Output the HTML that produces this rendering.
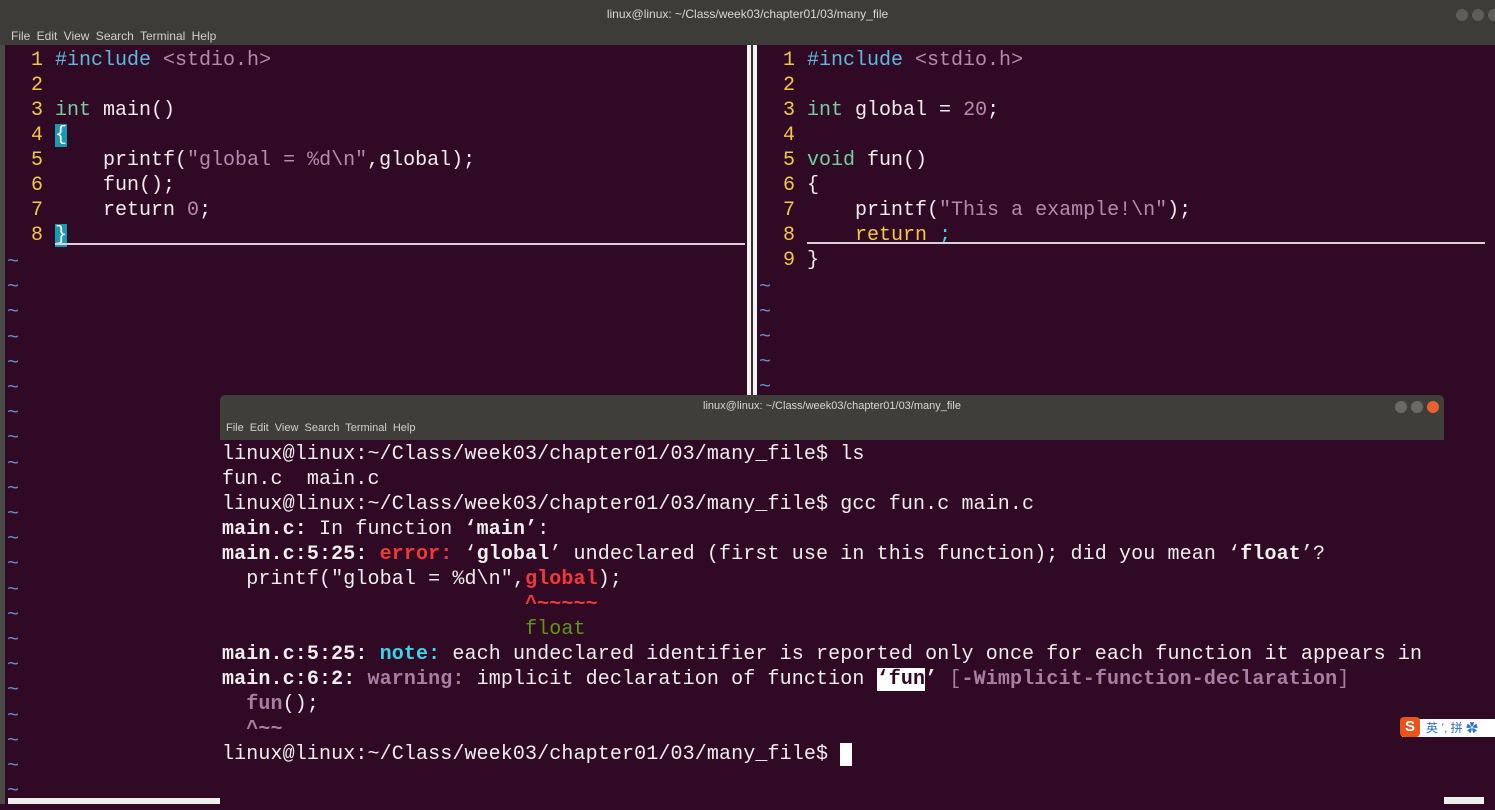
<!DOCTYPE html>
<html><head><meta charset="utf-8"><style>
*{margin:0;padding:0;box-sizing:border-box}
body{width:1495px;height:804px;overflow:hidden;background:#300a24;position:relative;font-family:"Liberation Mono",monospace;}
.ui{font-family:"Liberation Sans","DejaVu Sans",sans-serif;}
.l{position:absolute;font-size:20px;line-height:25px;height:25px;white-space:pre;color:#eeeeec;margin-top:2px}
.tt{letter-spacing:0.12px}
.n{color:#f2c84b}.p{color:#5fb8e0}.s{color:#b58ab0}.t{color:#70d0a0}.tl{color:#5f8fd0}
.b{font-weight:bold}.r{color:#ef3a3a}.c{color:#34d8e8}.w{color:#a77fa3}.g{color:#5a9a10}
</style></head><body>
<div style="position:absolute;left:0;top:0;width:1495px;height:45px;background:#3d3c38"></div>
<div class="ui" style="position:absolute;left:0;top:7px;width:1495px;text-align:center;font-size:12px;color:#d8d8d4">linux@linux: ~/Class/week03/chapter01/03/many_file</div>
<div class="ui" style="position:absolute;left:11px;top:29px;font-size:12px;color:#d0d0cc;word-spacing:3px">File Edit View Search Terminal Help</div>
<div style="position:absolute;left:1456px;top:9px;width:12px;height:12px;border-radius:50%;background:#5e5d59"></div>
<div style="position:absolute;left:1472px;top:9px;width:12px;height:12px;border-radius:50%;background:#5e5d59"></div>
<div style="position:absolute;left:1488px;top:9px;width:12px;height:12px;border-radius:50%;background:#5e5d59"></div>
<div style="position:absolute;left:0;top:45px;width:5px;height:759px;background:#4a4a46"></div>
<div style="position:absolute;left:747px;top:45px;width:10px;height:352px;background:#f2f2f2"></div>
<div style="position:absolute;left:751px;top:45px;width:2px;height:352px;background:#333"></div>
<div class="l" style="left:7px;top:46px"><span class="n">  1 </span><span class="p">#include</span> <span class="s">&lt;stdio.h&gt;</span></div>
<div class="l" style="left:7px;top:71px"><span class="n">  2 </span></div>
<div class="l" style="left:7px;top:96px"><span class="n">  3 </span><span class="t">int</span> main()</div>
<div class="l" style="left:7px;top:121px"><span class="n">  4 </span><span style="background:#1a9ab0;color:#fff">{</span></div>
<div class="l" style="left:7px;top:146px"><span class="n">  5 </span>    printf(<span class="s">"global = %d\n"</span>,global);</div>
<div class="l" style="left:7px;top:171px"><span class="n">  6 </span>    fun();</div>
<div class="l" style="left:7px;top:196px"><span class="n">  7 </span>    return <span class="s">0</span>;</div>
<div class="l" style="left:7px;top:221px"><span class="n">  8 </span><span style="background:#1a9ab0;color:#fff">}</span></div>
<div style="position:absolute;left:55px;top:243px;width:690px;height:2px;background:#d8d0d4"></div>
<div class="l" style="left:759px;top:46px"><span class="n">  1 </span><span class="p">#include</span> <span class="s">&lt;stdio.h&gt;</span></div>
<div class="l" style="left:759px;top:71px"><span class="n">  2 </span></div>
<div class="l" style="left:759px;top:96px"><span class="n">  3 </span><span class="t">int</span> global = <span class="s">20</span>;</div>
<div class="l" style="left:759px;top:121px"><span class="n">  4 </span></div>
<div class="l" style="left:759px;top:146px"><span class="n">  5 </span><span class="t">void</span> fun()</div>
<div class="l" style="left:759px;top:171px"><span class="n">  6 </span>{</div>
<div class="l" style="left:759px;top:196px"><span class="n">  7 </span>    printf(<span class="s">"This a example!\n"</span>);</div>
<div class="l" style="left:759px;top:221px"><span class="n">  8 </span>    <span class="n">return</span> <span class="c">;</span></div>
<div class="l" style="left:759px;top:246px"><span class="n">  9 </span>}</div>
<div style="position:absolute;left:807px;top:242px;width:678px;height:2px;background:#d8d0d4"></div>
<div class="l tl" style="left:7px;top:248px;line-height:25.2px;height:560px">~
~
~
~
~
~
~
~
~
~
~
~
~
~
~
~
~
~
~
~
~
~</div>
<div class="l tl" style="left:759px;top:273px;line-height:25px;height:130px">~
~
~
~
~</div>
<div style="position:absolute;left:8px;top:798px;width:212px;height:6px;background:#eee"></div>
<div style="position:absolute;left:220px;top:395px;width:1224px;height:409px;background:#300a24"></div>
<div style="position:absolute;left:220px;top:395px;width:1224px;height:45px;background:#3f3e3a;border-radius:5px 5px 0 0"></div>
<div class="ui" style="position:absolute;left:220px;top:400px;width:1224px;text-align:center;font-size:11px;color:#d8d8d4">linux@linux: ~/Class/week03/chapter01/03/many_file</div>
<div class="ui" style="position:absolute;left:226px;top:422px;font-size:11px;color:#d0d0cc;word-spacing:3px">File Edit View Search Terminal Help</div>
<div style="position:absolute;left:1395px;top:401px;width:12px;height:12px;border-radius:50%;background:#6a6965"></div>
<div style="position:absolute;left:1411px;top:401px;width:12px;height:12px;border-radius:50%;background:#6a6965"></div>
<div style="position:absolute;left:1427px;top:401px;width:12px;height:12px;border-radius:50%;background:#e9612c"></div>
<div class="l tt" style="left:222px;top:440px">linux@linux:~/Class/week03/chapter01/03/many_file$ ls</div>
<div class="l tt" style="left:222px;top:465px">fun.c  main.c</div>
<div class="l tt" style="left:222px;top:490px">linux@linux:~/Class/week03/chapter01/03/many_file$ gcc fun.c main.c</div>
<div class="l tt" style="left:222px;top:515px"><span class="b">main.c:</span> In function <span class="b">‘main’</span>:</div>
<div class="l tt" style="left:222px;top:540px"><span class="b">main.c:5:25: </span><span class="b r">error: </span>‘<span class="b">global</span>’ undeclared (first use in this function); did you mean ‘<span class="b">float</span>’?</div>
<div class="l tt" style="left:222px;top:565px">  printf("global = %d\n",<span class="b r">global</span>);</div>
<div class="l tt" style="left:222px;top:590px">                         <span class="b r">^~~~~~</span></div>
<div class="l tt" style="left:222px;top:615px">                         <span class="g">float</span></div>
<div class="l tt" style="left:222px;top:640px"><span class="b">main.c:5:25: </span><span class="b c">note: </span>each undeclared identifier is reported only once for each function it appears in</div>
<div class="l tt" style="left:222px;top:665px"><span class="b">main.c:6:2: </span><span class="b w">warning: </span>implicit declaration of function <span class="b" style="background:#fff;color:#300a24">‘fun</span><span class="b">’</span> <span class="w">[</span><span class="b w">-Wimplicit-function-declaration</span><span class="w">]</span></div>
<div class="l tt" style="left:222px;top:690px">  <span class="b w">fun</span>();</div>
<div class="l tt" style="left:222px;top:715px">  <span class="b w">^~~</span></div>
<div class="l tt" style="left:222px;top:740px">linux@linux:~/Class/week03/chapter01/03/many_file$ <span style="background:#fff"> </span></div>
<div class="ui" style="position:absolute;left:1402px;top:719px;width:93px;height:18px;background:#fff;font-size:12px;color:#2a6fc9;line-height:18px;padding-left:24px;font-family:'Liberation Sans','Noto Sans CJK SC',sans-serif">英 ’, 拼 ✿</div>
<div class="ui" style="position:absolute;left:1400px;top:717px;width:20px;height:20px;background:#e8541c;border-radius:4px;color:#fff;font-weight:bold;font-size:15px;text-align:center;line-height:20px">S</div>
<div style="position:absolute;left:1444px;top:797px;width:40px;height:7px;background:#eee"></div>
</body></html>
